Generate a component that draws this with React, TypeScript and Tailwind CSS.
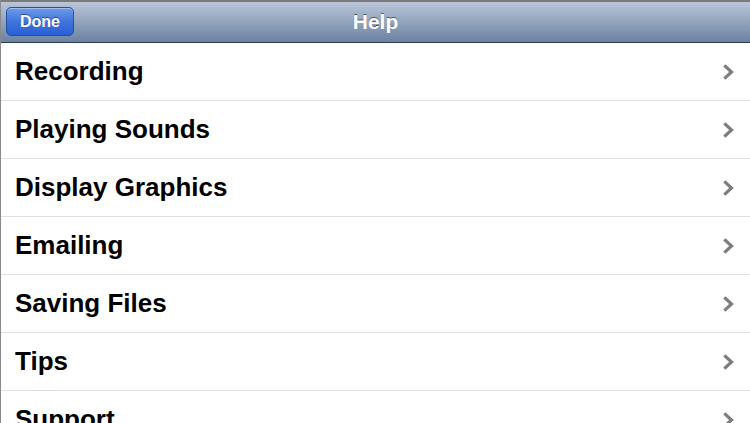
const items = [
  "Recording",
  "Playing Sounds",
  "Display Graphics",
  "Emailing",
  "Saving Files",
  "Tips",
  "Support",
];

const Chevron = () => (
  <svg width="12" height="16" viewBox="0 0 12 16" className="shrink-0">
    <path
      d="M2.5 2.5 L8.5 8 L2.5 13.5"
      fill="none"
      stroke="#7d7d7d"
      strokeWidth="3.2"
      strokeLinecap="square"
    />
  </svg>
);

const App = () => {
  return (
    <div
      className="h-[423px] w-[750px] overflow-hidden bg-white border-l border-[#8a8a8a]"
      style={{ fontFamily: '"Liberation Sans", Arial, sans-serif' }}
    >
      {/* nav bar */}
      <div className="relative flex h-[43px] items-center justify-center border-t-2 border-t-[#7b7b7b] border-b border-b-[#2f3d52] bg-gradient-to-b from-[#bac6d8] to-[#6b82a2]">
        <button className="absolute left-[5px] top-[5px] h-[29px] w-[68px] rounded-[5px] border border-[#2a4f9a] bg-gradient-to-b from-[#6f9be8] via-[#3f74dd] to-[#2a5fd3] text-[16px] font-bold text-white shadow-[inset_0_1px_0_rgba(255,255,255,0.35)] [text-shadow:0_-1px_0_rgba(0,0,0,0.45)]">
          Done
        </button>
        <h1 className="text-[21px] font-bold text-white [text-shadow:0_-1px_0_rgba(0,0,0,0.5)]">
          Help
        </h1>
      </div>

      {/* list */}
      <ul>
        {items.map((item) => (
          <li
            key={item}
            className="flex h-[58px] items-center justify-between border-b border-[#e0e0e0] pl-[14px] pr-[15px]"
          >
            <span className="text-[26px] font-bold text-black">{item}</span>
            <Chevron />
          </li>
        ))}
      </ul>
    </div>
  );
};

export default App;
